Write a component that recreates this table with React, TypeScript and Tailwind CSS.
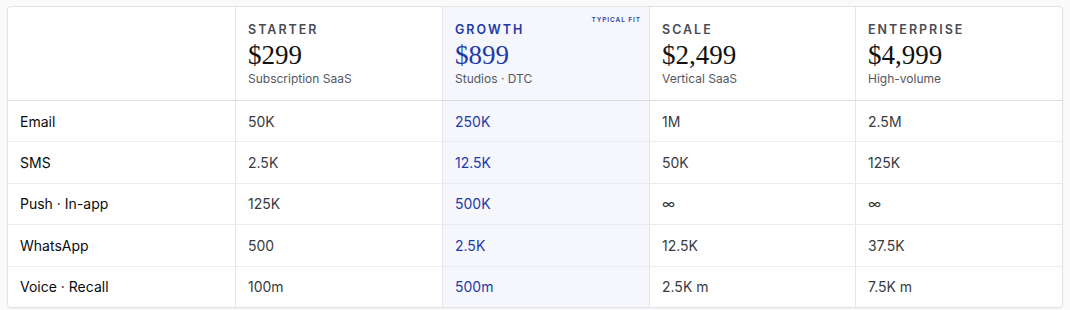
import React from "react";

const plans = [
  { name: "STARTER", price: "$299", sub: "Subscription SaaS" },
  { name: "GROWTH", price: "$899", sub: "Studios · DTC", hl: true },
  { name: "SCALE", price: "$2,499", sub: "Vertical SaaS" },
  { name: "ENTERPRISE", price: "$4,999", sub: "High-volume" },
];

const rows: [string, string[]][] = [
  ["Email", ["50K", "250K", "1M", "2.5M"]],
  ["SMS", ["2.5K", "12.5K", "50K", "125K"]],
  ["Push · In-app", ["125K", "500K", "∞", "∞"]],
  ["WhatsApp", ["500", "2.5K", "12.5K", "37.5K"]],
  ["Voice · Recall", ["100m", "500m", "2.5K m", "7.5K m"]],
];

export default function App() {
  return (
    <div className="min-h-[310px] w-[1070px] bg-[#fafafa] px-[7px] pt-[6px] font-['Inter','Liberation_Sans',sans-serif]">
      <div className="overflow-hidden rounded-[4px] border border-[#e3e3e7] bg-white shadow-[0_1px_2px_rgba(0,0,0,0.04)]">
        <div className="grid grid-cols-[227px_207px_207px_206px_1fr] border-b border-[#dcdce1]">
          <div />
          {plans.map((p) => (
            <div
              key={p.name}
              className={`relative border-l border-[#e6e6ea] px-3 pt-[15px] pb-[13px] ${p.hl ? "bg-[#f5f7fd]" : ""}`}
            >
              {p.hl && (
                <div className="absolute right-[8px] top-[9px] text-[6.5px] font-semibold tracking-[0.14em] text-[#2a45a8]">
                  TYPICAL FIT
                </div>
              )}
              <div
                className={`text-[12.5px] leading-[16px] font-semibold tracking-[0.16em] ${p.hl ? "text-[#1e3aa6]" : "text-[#4a4c55]"}`}
              >
                {p.name}
              </div>
              <div
                className={`mt-[2px] font-['Liberation_Serif',serif] text-[27px] leading-[30px] ${p.hl ? "text-[#1e3aa6]" : "text-[#111]"}`}
              >
                {p.price}
              </div>
              <div className="mt-[1px] text-[12px] leading-[16px] text-[#55575f]">{p.sub}</div>
            </div>
          ))}
        </div>
        {rows.map(([label, vals], ri) => (
          <div
            key={label}
            className={`grid grid-cols-[227px_207px_207px_206px_1fr] ${ri < rows.length - 1 ? "border-b border-[#ececef]" : ""}`}
          >
            <div className="flex h-[40.4px] items-center px-3 text-[14px] font-normal text-[#0b0b0e]">{label}</div>
            {vals.map((v, i) => (
              <div
                key={i}
                className={`flex items-center border-l border-[#e6e6ea] px-3 text-[14px] ${i === 1 ? "bg-[#f5f7fd] text-[#1e3aa6]" : "text-[#3a3b40]"}`}
              >
                {v}
              </div>
            ))}
          </div>
        ))}
      </div>
    </div>
  );
}
